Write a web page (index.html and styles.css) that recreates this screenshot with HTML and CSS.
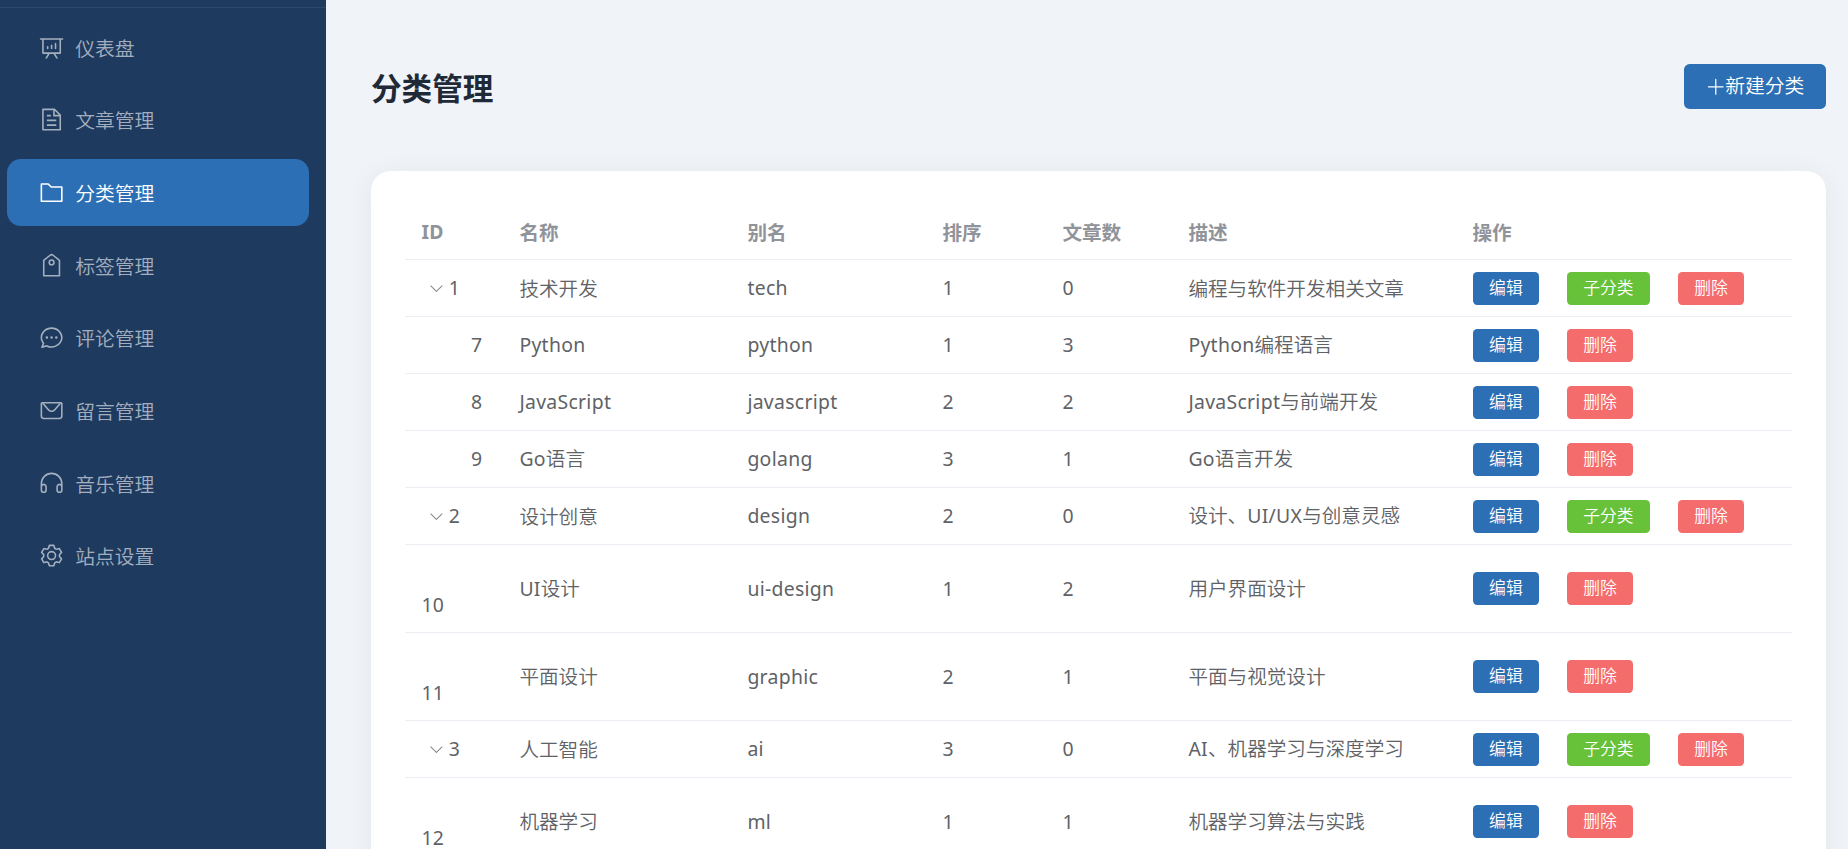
FILE: index.html
```
<!DOCTYPE html>
<html lang="zh-CN">
<head>
    <meta charset="UTF-8">
    <meta name="viewport" content="width=device-width, initial-scale=1.0">
    <title>分类管理</title>
    <link rel="stylesheet" href="styles.css">
</head>
<body>
    <aside class="sidebar">
        <div class="logo"></div>
        <nav class="menu">
            <a class="menu-item">
                <svg class="icon" viewBox="0 0 1024 1024"><path d="m665.216 768 110.848 192h-73.856L591.36 768H433.024L322.176 960H248.32l110.848-192H160a32 32 0 0 1-32-32V192H64a32 32 0 0 1 0-64h896a32 32 0 1 1 0 64h-64v544a32 32 0 0 1-32 32zM832 192H192v512h640zM352 448a32 32 0 0 1 32 32v64a32 32 0 0 1-64 0v-64a32 32 0 0 1 32-32m160-64a32 32 0 0 1 32 32v128a32 32 0 0 1-64 0V416a32 32 0 0 1 32-32m160-64a32 32 0 0 1 32 32v192a32 32 0 1 1-64 0V352a32 32 0 0 1 32-32"/></svg>
                <span>仪表盘</span>
            </a>
            <a class="menu-item">
                <svg class="icon" viewBox="0 0 1024 1024"><path d="M832 384H576V128H192v768h640zm-26.496-64L640 154.496V320zM160 64h480l256 256v608a32 32 0 0 1-32 32H160a32 32 0 0 1-32-32V96a32 32 0 0 1 32-32m160 448h384v64H320zm0-192h160v64H320zm0 384h384v64H320z"/></svg>
                <span>文章管理</span>
            </a>
            <a class="menu-item active">
                <svg class="icon" viewBox="0 0 1024 1024"><path d="M128 192v640h768V320H485.76L357.504 192zm-32-64h287.872l128.384 128H928a32 32 0 0 1 32 32v576a32 32 0 0 1-32 32H96a32 32 0 0 1-32-32V160a32 32 0 0 1 32-32"/></svg>
                <span>分类管理</span>
            </a>
            <a class="menu-item">
                <svg class="icon" viewBox="0 0 1024 1024"><path d="M224 318.336V896h576V318.336L552.512 115.84a64 64 0 0 0-81.024 0zM593.024 66.304l259.2 212.096A32 32 0 0 1 864 303.168V928a32 32 0 0 1-32 32H192a32 32 0 0 1-32-32V303.168a32 32 0 0 1 11.712-24.768l259.2-212.096a128 128 0 0 1 162.112 0"/><path d="M512 448a64 64 0 1 0 0-128 64 64 0 0 0 0 128m0 64a128 128 0 1 1 0-256 128 128 0 0 1 0 256"/></svg>
                <span>标签管理</span>
            </a>
            <a class="menu-item">
                <svg class="icon" viewBox="0 0 1024 1024"><path d="m174.72 855.68 135.296-45.12 23.68 11.84C388.096 849.536 448.576 864 512 864c211.84 0 384-166.784 384-352S723.84 160 512 160 128 326.784 128 512c0 69.12 24.96 139.264 70.848 199.232l22.08 28.8-46.272 115.584zm-45.248 82.56A32 32 0 0 1 89.6 896l58.368-145.92C94.72 680.32 64 596.864 64 512 64 299.904 256 96 512 96s448 203.904 448 416-192 416-448 416a461.06 461.06 0 0 1-206.912-48.384l-175.616 58.56z"/><path d="M512 563.2a51.2 51.2 0 1 1 0-102.4 51.2 51.2 0 0 1 0 102.4m192 0a51.2 51.2 0 1 1 0-102.4 51.2 51.2 0 0 1 0 102.4m-384 0a51.2 51.2 0 1 1 0-102.4 51.2 51.2 0 0 1 0 102.4"/></svg>
                <span>评论管理</span>
            </a>
            <a class="menu-item">
                <svg class="icon" viewBox="0 0 1024 1024"><path d="M128 224v512a64 64 0 0 0 64 64h640a64 64 0 0 0 64-64V224zm0-64h768a64 64 0 0 1 64 64v512a128 128 0 0 1-128 128H192A128 128 0 0 1 64 736V224a64 64 0 0 1 64-64"/><path d="M904 224 656.512 506.88a192 192 0 0 1-289.024 0L120 224zm-698.944 0 210.56 240.704a128 128 0 0 0 192.704 0L818.944 224z"/></svg>
                <span>留言管理</span>
            </a>
            <a class="menu-item">
                <svg class="icon" viewBox="0 0 1024 1024"><path d="M896 529.152V512a384 384 0 1 0-768 0v17.152A128 128 0 0 1 320 640v128a128 128 0 1 1-256 0V512a448 448 0 1 1 896 0v256a128 128 0 1 1-256 0V640a128 128 0 0 1 192-110.848M896 640a64 64 0 0 0-128 0v128a64 64 0 0 0 128 0zm-768 0v128a64 64 0 0 0 128 0V640a64 64 0 1 0-128 0"/></svg>
                <span>音乐管理</span>
            </a>
            <a class="menu-item">
                <svg class="icon" viewBox="0 0 1024 1024"><path d="M600.704 64a32 32 0 0 1 30.464 22.208l35.2 109.376c14.784 7.232 28.928 15.36 42.432 24.512l112.384-24.192a32 32 0 0 1 34.432 15.36L944.32 364.8a32 32 0 0 1-4.032 37.504l-77.12 85.12a357.12 357.12 0 0 1 0 49.024l77.12 85.248a32 32 0 0 1 4.032 37.504l-88.704 153.6a32 32 0 0 1-34.432 15.296L708.8 803.904c-13.44 9.088-27.648 17.28-42.368 24.512l-35.264 109.376A32 32 0 0 1 600.704 960H423.296a32 32 0 0 1-30.464-22.208L357.696 828.48a351.616 351.616 0 0 1-42.56-24.64l-112.32 24.256a32 32 0 0 1-34.432-15.36L79.68 659.2a32 32 0 0 1 4.032-37.504l77.12-85.248a357.12 357.12 0 0 1 0-48.896l-77.12-85.248A32 32 0 0 1 79.68 364.8l88.704-153.6a32 32 0 0 1 34.432-15.296l112.32 24.256c13.568-9.152 27.776-17.408 42.56-24.64l35.2-109.312A32 32 0 0 1 423.232 64H600.64zm-23.424 64H446.72l-36.352 113.088-24.512 11.968a294.113 294.113 0 0 0-34.816 20.096l-22.656 15.36-116.224-25.088-65.28 113.152 79.68 88.192-1.92 27.136a293.12 293.12 0 0 0 0 40.192l1.92 27.136-79.808 88.192 65.344 113.152 116.224-25.024 22.656 15.296a294.113 294.113 0 0 0 34.816 20.096l24.512 11.968L446.72 896h130.688l36.48-113.152 24.448-11.904a288.282 288.282 0 0 0 34.752-20.096l22.592-15.296 116.288 25.024 65.28-113.152-79.744-88.192 1.92-27.136a293.12 293.12 0 0 0 0-40.256l-1.92-27.136 79.808-88.128-65.344-113.152-116.288 24.96-22.592-15.232a287.616 287.616 0 0 0-34.752-20.096l-24.448-11.904L577.344 128zM512 320a192 192 0 1 1 0 384 192 192 0 0 1 0-384m0 64a128 128 0 1 0 0 256 128 128 0 0 0 0-256"/></svg>
                <span>站点设置</span>
            </a>
        </nav>
    </aside>

    <main class="main">
        <div class="page-header">
            <h2>分类管理</h2>
            <button class="btn-new">
                <svg viewBox="0 0 1024 1024"><path d="M480 480V128a32 32 0 0 1 64 0v352h352a32 32 0 1 1 0 64H544v352a32 32 0 1 1-64 0V544H128a32 32 0 0 1 0-64z"/></svg>
                <span>新建分类</span>
            </button>
        </div>

        <div class="card">
            <table class="table">
                <colgroup>
                    <col class="col-id">
                    <col class="col-name">
                    <col class="col-slug">
                    <col class="col-sort">
                    <col class="col-count">
                    <col class="col-desc">
                    <col class="col-actions">
                </colgroup>
                <thead>
                    <tr>
                        <th><span class="en">ID</span></th>
                        <th>名称</th>
                        <th>别名</th>
                        <th>排序</th>
                        <th>文章数</th>
                        <th>描述</th>
                        <th>操作</th>
                    </tr>
                </thead>
                <tbody>
                    <tr>
                        <td class="parent"><svg class="arrow" viewBox="0 0 1024 1024"><path d="M831.872 340.864 512 652.672 192.128 340.864a30.592 30.592 0 0 0-42.752 0 29.12 29.12 0 0 0 0 41.6L489.664 714.24a32 32 0 0 0 44.672 0l340.288-331.712a29.12 29.12 0 0 0 0-41.728 30.592 30.592 0 0 0-42.752 0z"/></svg><span class="en">1</span></td>
                        <td>技术开发</td>
                        <td><span class="en">tech</span></td>
                        <td><span class="en">1</span></td>
                        <td><span class="en">0</span></td>
                        <td>编程与软件开发相关文章</td>
                        <td class="ops"><div class="actions"><button class="btn edit">编辑</button><button class="btn sub">子分类</button><button class="btn del">删除</button></div></td>
                    </tr>
                    <tr>
                        <td class="child"><span class="en">7</span></td>
                        <td><span class="en">Python</span></td>
                        <td><span class="en">python</span></td>
                        <td><span class="en">1</span></td>
                        <td><span class="en">3</span></td>
                        <td><span class="en">Python</span>编程语言</td>
                        <td class="ops"><div class="actions"><button class="btn edit">编辑</button><button class="btn del">删除</button></div></td>
                    </tr>
                    <tr>
                        <td class="child"><span class="en">8</span></td>
                        <td><span class="en">JavaScript</span></td>
                        <td><span class="en">javascript</span></td>
                        <td><span class="en">2</span></td>
                        <td><span class="en">2</span></td>
                        <td><span class="en">JavaScript</span>与前端开发</td>
                        <td class="ops"><div class="actions"><button class="btn edit">编辑</button><button class="btn del">删除</button></div></td>
                    </tr>
                    <tr>
                        <td class="child"><span class="en">9</span></td>
                        <td><span class="en">Go</span>语言</td>
                        <td><span class="en">golang</span></td>
                        <td><span class="en">3</span></td>
                        <td><span class="en">1</span></td>
                        <td><span class="en">Go</span>语言开发</td>
                        <td class="ops"><div class="actions"><button class="btn edit">编辑</button><button class="btn del">删除</button></div></td>
                    </tr>
                    <tr>
                        <td class="parent"><svg class="arrow" viewBox="0 0 1024 1024"><path d="M831.872 340.864 512 652.672 192.128 340.864a30.592 30.592 0 0 0-42.752 0 29.12 29.12 0 0 0 0 41.6L489.664 714.24a32 32 0 0 0 44.672 0l340.288-331.712a29.12 29.12 0 0 0 0-41.728 30.592 30.592 0 0 0-42.752 0z"/></svg><span class="en">2</span></td>
                        <td>设计创意</td>
                        <td><span class="en">design</span></td>
                        <td><span class="en">2</span></td>
                        <td><span class="en">0</span></td>
                        <td>设计、<span class="en">UI/UX</span>与创意灵感</td>
                        <td class="ops"><div class="actions"><button class="btn edit">编辑</button><button class="btn sub">子分类</button><button class="btn del">删除</button></div></td>
                    </tr>
                    <tr class="tall">
                        <td class="wrapped"><span class="en">10</span></td>
                        <td><span class="en">UI</span>设计</td>
                        <td><span class="en">ui-design</span></td>
                        <td><span class="en">1</span></td>
                        <td><span class="en">2</span></td>
                        <td>用户界面设计</td>
                        <td class="ops"><div class="actions"><button class="btn edit">编辑</button><button class="btn del">删除</button></div></td>
                    </tr>
                    <tr class="tall">
                        <td class="wrapped"><span class="en">11</span></td>
                        <td>平面设计</td>
                        <td><span class="en">graphic</span></td>
                        <td><span class="en">2</span></td>
                        <td><span class="en">1</span></td>
                        <td>平面与视觉设计</td>
                        <td class="ops"><div class="actions"><button class="btn edit">编辑</button><button class="btn del">删除</button></div></td>
                    </tr>
                    <tr>
                        <td class="parent"><svg class="arrow" viewBox="0 0 1024 1024"><path d="M831.872 340.864 512 652.672 192.128 340.864a30.592 30.592 0 0 0-42.752 0 29.12 29.12 0 0 0 0 41.6L489.664 714.24a32 32 0 0 0 44.672 0l340.288-331.712a29.12 29.12 0 0 0 0-41.728 30.592 30.592 0 0 0-42.752 0z"/></svg><span class="en">3</span></td>
                        <td>人工智能</td>
                        <td><span class="en">ai</span></td>
                        <td><span class="en">3</span></td>
                        <td><span class="en">0</span></td>
                        <td><span class="en">AI</span>、机器学习与深度学习</td>
                        <td class="ops"><div class="actions"><button class="btn edit">编辑</button><button class="btn sub">子分类</button><button class="btn del">删除</button></div></td>
                    </tr>
                    <tr class="tall">
                        <td class="wrapped"><span class="en">12</span></td>
                        <td>机器学习</td>
                        <td><span class="en">ml</span></td>
                        <td><span class="en">1</span></td>
                        <td><span class="en">1</span></td>
                        <td>机器学习算法与实践</td>
                        <td class="ops"><div class="actions"><button class="btn edit">编辑</button><button class="btn del">删除</button></div></td>
                    </tr>
                </tbody>
            </table>
        </div>
    </main>
</body>
</html>
```
FILE: styles.css
```
* {
    box-sizing: border-box;
}
body {
    margin: 0;
    height: 100vh;
    display: flex;
    overflow: hidden;
    background-color: #f0f4f9;
    font-family: "Noto Sans CJK SC", "Noto Sans", sans-serif;
    font-size: 19.6px;
    font-weight: 350;
    color: #606266;
}
.sidebar {
    width: 326px;
    flex-shrink: 0;
    background-color: #1e3a5f;
}
.logo {
    height: 8px;
    border-bottom: 1px solid rgba(255, 255, 255, 0.08);
}
.menu {
    display: flex;
    flex-direction: column;
    gap: 5.6px;
    padding: 5.6px 17px 0 7px;
    font-size: 19.8px;
}
.menu-item {
    display: flex;
    align-items: center;
    gap: 11px;
    height: 67.1px;
    padding-left: 32px;
    border-radius: 14px;
    color: rgba(255, 255, 255, 0.6);
}
.menu-item.active {
    background-color: #2d6fb5;
    color: #fff;
}
.icon {
    width: 25.2px;
    height: 25.2px;
    fill: currentColor;
}
.main {
    flex: 1;
    height: 100vh;
    overflow: hidden;
    padding: 64px 22px 0 45px;
}
.page-header {
    display: flex;
    justify-content: space-between;
    height: 107px;
}
.page-header h2 {
    margin: 0;
    font-size: 30.6px;
    line-height: 46px;
    font-weight: 700;
    color: #1f2937;
}
button {
    border: none;
    font-family: inherit;
    font-weight: inherit;
    color: #fff;
}
.btn-new {
    display: flex;
    align-items: center;
    justify-content: center;
    width: 142px;
    height: 45px;
    padding: 0 0 4px;
    border-radius: 5.6px;
    background-color: #2d6fb5;
    font-size: 19.8px;
}
.btn-new svg {
    width: 19.6px;
    height: 19.6px;
    margin-top: 4px;
    fill: currentColor;
}
.card {
    height: 900px;
    padding: 34px;
    border-radius: 20px;
    background-color: #fff;
    box-shadow: 0 3px 28px rgba(0, 0, 0, 0.06);
}
.table {
    width: 1387px;
    table-layout: fixed;
    border-collapse: separate;
    border-spacing: 0;
}
.col-id { width: 98px; }
.col-name { width: 228px; }
.col-slug { width: 195px; }
.col-sort { width: 120px; }
.col-count { width: 126px; }
.col-desc { width: 284px; }
.col-actions { width: 336px; }
th, td {
    height: 57px;
    padding: 0 0 1px 16.4px;
    border-bottom: 1px solid #ebeef5;
    line-height: 28px;
    text-align: left;
    vertical-align: middle;
    white-space: nowrap;
}
th {
    height: 55px;
    font-weight: 700;
    color: #909399;
}
.tall td {
    height: 88px;
}
.ops {
    padding: 0 0 0 16.8px;
}
.en {
    font-family: "Noto Sans", sans-serif;
    font-size: 19.4px;
    font-weight: 400;
    letter-spacing: 0.3px;
}
th .en {
    font-weight: 700;
}
.parent {
    padding-left: 23px;
}
.arrow {
    width: 16.8px;
    height: 16.8px;
    margin-right: 4px;
    vertical-align: -2px;
    fill: #808286;
}
.child {
    padding-left: 66px;
}
.tall .wrapped {
    padding-top: 33px;
}
.actions {
    display: flex;
    gap: 28px;
}
.btn {
    height: 33px;
    padding: 0 16.3px 3px;
    border-radius: 4.2px;
    font-size: 16.8px;
    line-height: 30px;
}
.edit { background-color: #2d6fb5; }
.sub { background-color: #67c23a; }
.del { background-color: #f56c6c; }
```
